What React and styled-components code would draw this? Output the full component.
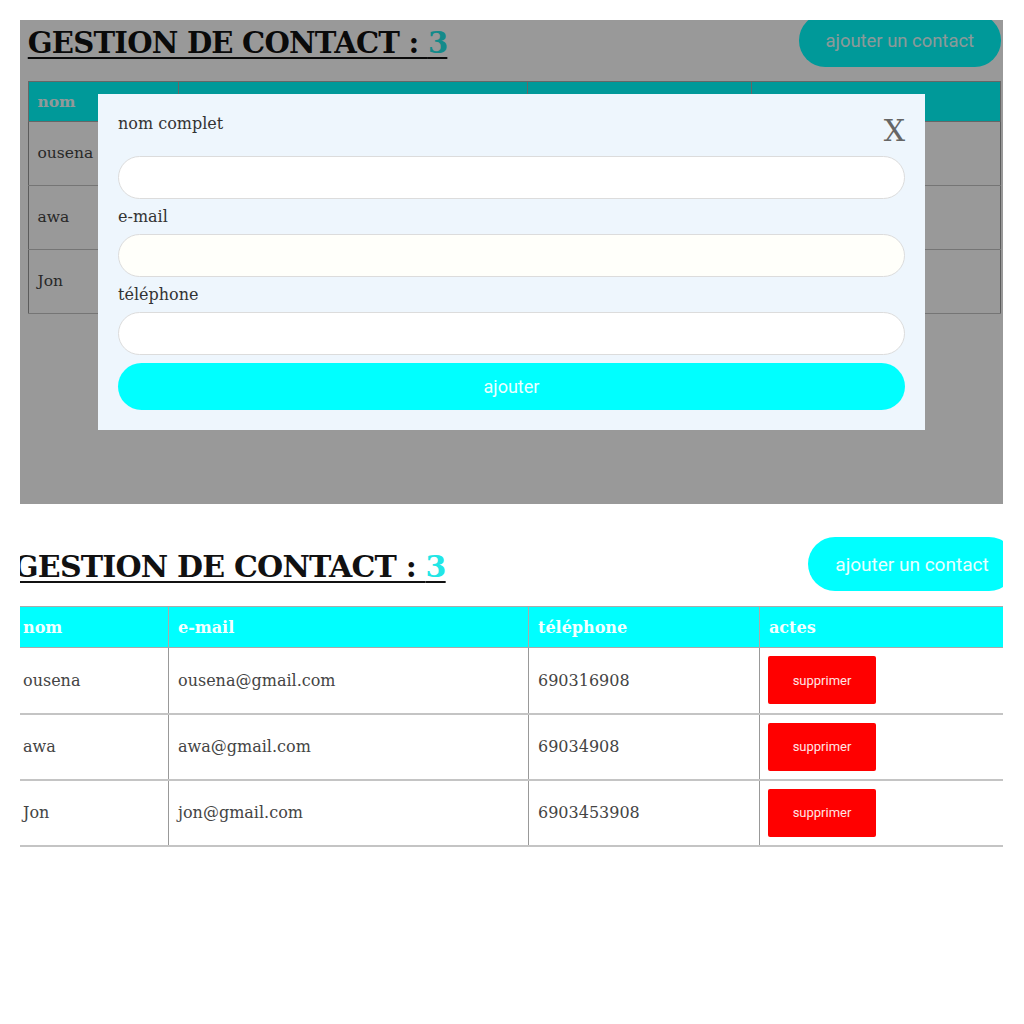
import React from 'react';
import styled, { createGlobalStyle } from 'styled-components';

const GlobalStyle = createGlobalStyle`
  html, body { margin: 0; padding: 0; background: #fff; }
  body { font-family: "DejaVu Serif", serif; }
  * { box-sizing: border-box; }
`;

const Shots = styled.main`
  display: flex;
  flex-direction: column;
  gap: 16px;
  padding: 20px 0 0 20px;
  width: 1003px;
`;

const Frame = styled.section`
  position: relative;
  overflow: hidden;
  width: 983px;
  height: ${p => p.$h}px;
  background: #fff;
`;

const Page = styled.div`
  width: 1003px;
  margin-left: ${p => p.$x}px;
  margin-top: ${p => p.$y}px;
  zoom: ${p => p.$zoom};
`;

const TitleRow = styled.header`
  display: flex;
  justify-content: space-between;
  align-items: flex-start;
  height: 54px;
  margin-bottom: 15px;
`;

const Title = styled.h1`
  margin: 0;
  padding-top: 15px;
  font: bold 30px/1 "DejaVu Serif", serif;
  letter-spacing: -0.8px;
  color: #111;
  text-decoration: underline;
  text-decoration-thickness: 2px;
  text-underline-offset: 4px;
`;

const Count = styled.span`
  color: #22e6e6;
`;

const AddButton = styled.button`
  width: 208px;
  height: 54px;
  border: none;
  border-radius: 27px;
  background: #00ffff;
  color: #eaffff;
  font: 19px "Roboto", sans-serif;
  padding: 0;
`;

const Table = styled.table`
  width: 100%;
  border-collapse: collapse;
  table-layout: fixed;
`;

const Th = styled.th`
  width: ${p => (p.$w ? `${p.$w}px` : 'auto')};
  height: 41px;
  padding: 0 9px;
  background: #00ffff;
  color: #f4ffff;
  font: bold 16px "DejaVu Serif", serif;
  text-align: left;
  border: 1px solid #aaa;
`;

const Td = styled.td`
  height: 66px;
  padding: 0 9px;
  font: 16px "DejaVu Serif", serif;
  color: #444;
  vertical-align: middle;
  border-left: 1px solid #999;
  border-right: 1px solid #999;
  border-bottom: 2px solid #c4c4c4;
`;

const ActionCell = styled(Td)`
  padding: 0 8px;
`;

const DeleteButton = styled.button`
  width: 108px;
  height: 48px;
  border: none;
  border-radius: 2px;
  background: #ff0000;
  color: #ffe4e4;
  font: 13px "Roboto", sans-serif;
  padding: 0;
`;

const Overlay = styled.div`
  position: absolute;
  inset: 0;
  background: rgba(0, 0, 0, 0.4);
  display: flex;
  align-items: center;
  justify-content: center;
`;

const Modal = styled.form`
  width: 827px;
  padding: 20px;
  background: #eef6fd;
  display: flex;
  flex-direction: column;
`;

const ModalHeader = styled.div`
  display: flex;
  justify-content: space-between;
  align-items: flex-start;
  height: 42px;
`;

const Label = styled.label`
  display: block;
  font: 16px/20px "DejaVu Serif", serif;
  color: #333;
  padding: ${p => (p.$first ? '0' : '8px 0 7px')};
`;

const CloseButton = styled.button`
  border: none;
  background: none;
  padding: 0;
  margin-top: 2px;
  font: 30px/30px "DejaVu Serif", serif;
  color: #666;
`;

const Input = styled.input`
  width: 100%;
  height: 43px;
  border: 1px solid #dcdcdc;
  border-radius: 22px;
  background: ${p => p.$tint || '#fff'};
  padding: 0 16px;
  font: 16px "DejaVu Serif", serif;
  outline: none;
`;

const SubmitButton = styled.button`
  margin-top: 8px;
  width: 100%;
  height: 47px;
  border: none;
  border-radius: 24px;
  background: #00ffff;
  color: #eaffff;
  font: 18px "Roboto", sans-serif;
`;

const contacts = [
  { nom: 'ousena', email: 'ousena@gmail.com', tel: '690316908' },
  { nom: 'awa', email: 'awa@gmail.com', tel: '69034908' },
  { nom: 'Jon', email: 'jon@gmail.com', tel: '6903453908' },
];

function ContactPage({ x, y, zoom }) {
  return (
    <Page $x={x} $y={y} $zoom={zoom}>
      <TitleRow>
        <Title>
          GESTION DE CONTACT : <Count>{contacts.length}</Count>
        </Title>
        <AddButton type="button">ajouter un contact</AddButton>
      </TitleRow>
      <Table>
        <thead>
          <tr>
            <Th $w={155}>nom</Th>
            <Th $w={360}>e-mail</Th>
            <Th $w={231}>téléphone</Th>
            <Th>actes</Th>
          </tr>
        </thead>
        <tbody>
          {contacts.map(c => (
            <tr key={c.email}>
              <Td>{c.nom}</Td>
              <Td>{c.email}</Td>
              <Td>{c.tel}</Td>
              <ActionCell>
                <DeleteButton type="button">supprimer</DeleteButton>
              </ActionCell>
            </tr>
          ))}
        </tbody>
      </Table>
    </Page>
  );
}

export default function App() {
  return (
    <>
      <GlobalStyle />
      <Shots>
        <Frame $h={484}>
          <ContactPage x={8} y={-6} zoom={0.97} />
          <Overlay>
            <Modal onSubmit={e => e.preventDefault()}>
              <ModalHeader>
                <Label $first>nom complet</Label>
                <CloseButton type="button">X</CloseButton>
              </ModalHeader>
              <Input type="text" />
              <Label>e-mail</Label>
              <Input type="email" $tint="#fffffa" />
              <Label>téléphone</Label>
              <Input type="tel" />
              <SubmitButton type="submit">ajouter</SubmitButton>
            </Modal>
          </Overlay>
        </Frame>
        <Frame $h={488}>
          <ContactPage x={-7} y={17} zoom={1} />
        </Frame>
      </Shots>
    </>
  );
}
